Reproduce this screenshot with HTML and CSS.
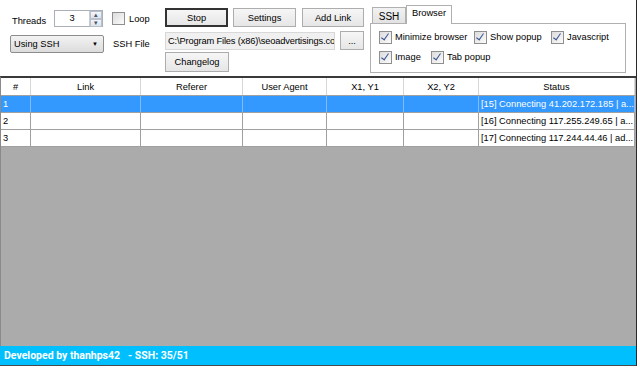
FILE: index.html
```html
<!DOCTYPE html>
<html lang="en">
<head>
    <meta charset="UTF-8">
    <title>Auto Click</title>
    <link rel="stylesheet" href="styles.css">
</head>
<body>

<div class="window">
    <div class="toolbar">
        <div class="col-left">
            <div class="row">
                <span class="label threads-label">Threads</span>
                <div class="spin">
                    <span class="spin-value">3</span>
                    <span class="spin-btns">
                        <span class="spin-up">&#9652;</span>
                        <span class="spin-down">&#9662;</span>
                    </span>
                </div>
                <span class="check plain"></span>
                <span class="label">Loop</span>
            </div>
            <div class="row row-2">
                <div class="combo">
                    <span>Using SSH</span>
                    <span class="combo-arrow">&#9660;</span>
                </div>
                <span class="label ssh-file">SSH File</span>
            </div>
        </div>

        <div class="col-mid">
            <div class="row">
                <button class="btn btn-default">Stop</button>
                <button class="btn">Settings</button>
                <button class="btn btn-add">Add Link</button>
            </div>
            <div class="row row-path">
                <div class="path">C:\Program Files (x86)\seoadvertisings.co</div>
                <button class="btn btn-browse">...</button>
            </div>
            <div class="row">
                <button class="btn btn-log">Changelog</button>
            </div>
        </div>

        <div class="tabs">
            <div class="tab-strip">
                <span class="tab">SSH</span>
                <span class="tab active">Browser</span>
            </div>
            <div class="tab-panel">
                <div class="opt-row">
                    <span class="opt opt-min"><span class="check"></span>Minimize browser</span>
                    <span class="opt opt-popup"><span class="check"></span>Show popup</span>
                    <span class="opt"><span class="check"></span>Javascript</span>
                </div>
                <div class="opt-row">
                    <span class="opt opt-img"><span class="check"></span>Image</span>
                    <span class="opt"><span class="check"></span>Tab popup</span>
                </div>
            </div>
        </div>
    </div>

    <div class="grid">
        <table>
            <thead>
                <tr>
                    <th class="c-num">#</th>
                    <th class="c-link">Link</th>
                    <th class="c-ref">Referer</th>
                    <th class="c-ua">User Agent</th>
                    <th class="c-xy1">X1, Y1</th>
                    <th class="c-xy2">X2, Y2</th>
                    <th class="c-status">Status</th>
                </tr>
            </thead>
            <tbody>
                <tr class="selected">
                    <td>1</td><td></td><td></td><td></td><td></td><td></td>
                    <td>[15] Connecting 41.202.172.185 | a...</td>
                </tr>
                <tr>
                    <td>2</td><td></td><td></td><td></td><td></td><td></td>
                    <td>[16] Connecting 117.255.249.65 | a...</td>
                </tr>
                <tr>
                    <td>3</td><td></td><td></td><td></td><td></td><td></td>
                    <td>[17] Connecting 117.244.44.46 | ad...</td>
                </tr>
            </tbody>
        </table>
    </div>

    <div class="statusbar">
        <span>Developed by thanhps42</span>
        <span class="ssh-count">- SSH: 35/51</span>
    </div>
</div>

</body>
</html>
```

FILE: styles.css
```css
body {
    margin: 0;
    padding: 0;
    background-color: #ffffff;
    font-family: "Liberation Sans", Arial, sans-serif;
    font-size: 9.3px;
    color: #000;
}

.window {
    width: 636px;
    height: 366px;
    display: flex;
    flex-direction: column;
    border-right: 1px solid #2a2a2a;
    background-color: #ffffff;
}

.toolbar {
    height: 76px;
    display: flex;
    flex-shrink: 0;
}

.row {
    display: flex;
    align-items: center;
}

.label {
    white-space: nowrap;
}

/* left column */
.col-left {
    width: 155px;
    padding: 10px 0 0 10px;
}

.threads-label {
    width: 42px;
    margin: 4px 0 0 2px;
}

.spin {
    width: 47px;
    height: 15px;
    border: 1px solid #aab0b8;
    display: flex;
    align-items: center;
}

.spin-value {
    flex: 1;
    text-align: center;
    margin-top: -2px;
}

.spin-btns {
    width: 12px;
    height: 15px;
    display: flex;
    flex-direction: column;
    border-left: 1px solid #c8ccd2;
}

.spin-btns span {
    flex: 1;
    font-size: 7px;
    line-height: 6px;
    text-align: center;
    color: #44566e;
    background: linear-gradient(#f4f6f9, #dde3ea);
    border: 1px solid #b7c0cc;
}

.check {
    width: 11px;
    height: 11px;
    border: 1px solid #8e8f8f;
    background: linear-gradient(135deg, #dcdcdc, #fbfbfb);
    margin-right: 4px;
    display: inline-block;
    flex-shrink: 0;
    position: relative;
}

.check::after {
    content: "";
    position: absolute;
    left: 3px;
    top: 0;
    width: 3px;
    height: 7px;
    border: solid #3a5590;
    border-width: 0 1.5px 1.5px 0;
    transform: rotate(35deg);
}

.check.plain::after {
    display: none;
}

.col-left .check {
    margin-left: 9px;
}

.row-2 {
    margin-top: 8px;
}

.combo {
    width: 86px;
    height: 16px;
    padding: 0 3px;
    border: 1px solid #8d8d8d;
    border-radius: 2px;
    background: linear-gradient(#f3f3f3, #dcdcdc);
    display: flex;
    justify-content: space-between;
    align-items: center;
}

.combo-arrow {
    font-size: 6px;
    margin-right: 2px;
}

.ssh-file {
    margin-left: 9px;
}

/* middle column */
.col-mid {
    width: 205px;
    padding-top: 8px;
}

.btn {
    font-family: inherit;
    font-size: 9.3px;
    height: 19px;
    width: 63px;
    padding: 0;
    background: linear-gradient(#f6f6f6, #e6e6e6);
    border: 1px solid #adadad;
    margin-right: 5px;
    color: #000;
}

.btn-default {
    border: 2px solid #333;
}

.btn-add {
    width: 62px;
    margin-left: 1px;
}

.row-path {
    margin-top: 4px;
}

.path {
    width: 166px;
    height: 16px;
    line-height: 16px;
    padding-left: 2px;
    letter-spacing: -0.15px;
    background-color: #f0f0f0;
    border: 1px solid #d8d8d8;
    white-space: nowrap;
    overflow: hidden;
    margin-right: 5px;
}

.btn-browse {
    width: 24px;
}

.btn-log {
    width: 64px;
    height: 20px;
    margin-top: 2px;
}

/* tab control */
.tabs {
    width: 256px;
    padding-top: 5px;
}

.tab-strip {
    display: flex;
    align-items: flex-end;
    height: 18px;
    padding-left: 2px;
}

.tab {
    width: 32px;
    height: 15px;
    line-height: 17px;
    text-align: center;
    font-size: 10px;
    border: 1px solid #b0b0b0;
    border-bottom: none;
    background: linear-gradient(#f2f2f2, #e2e2e2);
}

.tab.active {
    width: 44px;
    height: 18px;
    line-height: 14px;
    font-size: 9.3px;
    background: #ffffff;
    margin-bottom: -1px;
    position: relative;
}

.tab-panel {
    height: 50px;
    border: 1px solid #b0b0b0;
    padding: 6px 0 0 8px;
    box-sizing: border-box;
}

.opt-row {
    display: flex;
    align-items: center;
    height: 14px;
    margin-bottom: 6px;
}

.opt {
    display: flex;
    align-items: center;
    white-space: nowrap;
}

.opt .check {
    margin-right: 3px;
}

.opt-min {
    width: 95px;
}

.opt-popup {
    width: 77px;
}

.opt-img {
    width: 52px;
}

/* data grid */
.grid {
    flex: 1;
    background-color: #ababab;
    border-top: 2px solid #3a3a3a;
    border-left: 1px solid #8a8a8a;
}

table {
    border-collapse: collapse;
    table-layout: fixed;
    width: 634px;
}

th {
    height: 17px;
    font-weight: normal;
    text-align: center;
    background-color: #ffffff;
    border-right: 1px solid #d6d6d6;
    border-bottom: 1px solid #a0a0a0;
    padding: 0;
}

td {
    height: 16px;
    padding: 0 0 0 2px;
    background-color: #ffffff;
    border-right: 1px solid #a0a0a0;
    border-bottom: 1px solid #a0a0a0;
    white-space: nowrap;
    overflow: hidden;
}

tr.selected td {
    background-color: #3399ff;
    color: #ffffff;
    border-right-color: #7fbcff;
}

.c-num { width: 29px; }
.c-link { width: 109px; }
.c-ref { width: 101px; }
.c-ua { width: 83px; }
.c-xy1 { width: 76px; }
.c-xy2 { width: 74px; }
.c-status { width: 155px; }

/* status bar */
.statusbar {
    height: 19px;
    flex-shrink: 0;
    background-color: #00bfff;
    color: #ffffff;
    font-family: Roboto, sans-serif;
    font-weight: bold;
    font-size: 10.5px;
    display: flex;
    align-items: center;
    padding-left: 4px;
    border-bottom: 1px solid #4a4a4a;
}

.ssh-count {
    margin-left: 8px;
}
```
